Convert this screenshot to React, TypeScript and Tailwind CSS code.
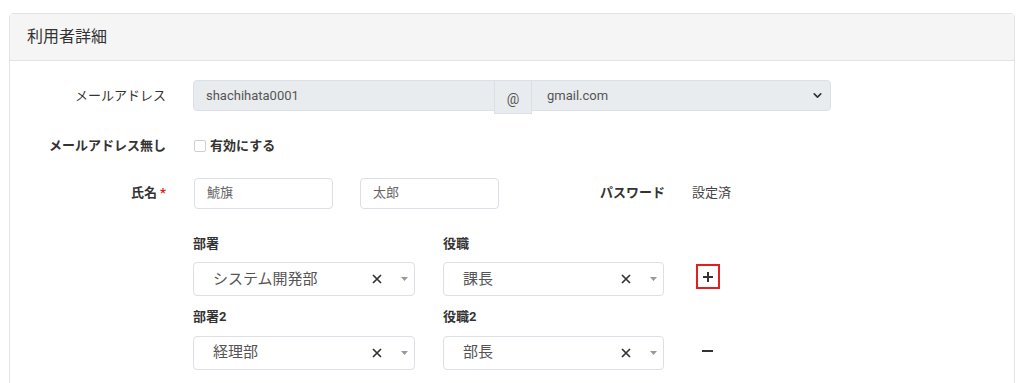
import { ChevronDown } from "lucide-react";

function Select2({ value, width }: { value: string; width: string }) {
  return (
    <div
      className={`flex h-[34px] ${width} items-center rounded border border-[#dcdfe6] bg-white pl-[19px] pr-[6px]`}
    >
      <span className="flex-1 text-[15px] text-[#555]">{value}</span>
      <svg width="10" height="10" viewBox="0 0 10 10" className="mr-[19px]">
        <path d="M1 1l8 8M9 1l-8 8" stroke="#333" strokeWidth="1.7" />
      </svg>
      <svg width="7" height="4" viewBox="0 0 7 4">
        <path d="M0 0h7L3.5 4z" fill="#999" />
      </svg>
    </div>
  );
}

function App() {
  return (
    <div
      className="h-[383px] w-[1024px] overflow-hidden bg-white pl-[9px] pr-[9px] pt-[13px]"
      style={{ fontFamily: "Roboto, 'Noto Sans CJK JP', sans-serif" }}
    >
      <div className="h-[400px] rounded-t border border-[#e3e3e3]">
        <div className="flex h-[47px] items-center border-b border-[#e3e3e3] bg-[#f5f5f5] pl-[17px] text-[16px] text-[#333]">
          利用者詳細
        </div>

        <div className="pt-[19px] text-[13px] text-[#333]">
          {/* email */}
          <div className="flex items-start">
            <div className="w-[156px] pt-[6px] text-right">メールアドレス</div>
            <div className="ml-[27px] flex">
              <div className="flex h-[31px] w-[302px] items-center rounded-l border border-[#dcdfe6] bg-[#e9ecef] pl-[12px] text-[#555]">
                shachihata0001
              </div>
              <div className="-ml-px flex h-[34px] w-[38px] items-center justify-center border border-[#dcdfe6] bg-[#e9ecef] pt-[4px] text-[14px] text-[#555]">
                @
              </div>
              <div className="-ml-px flex h-[31px] w-[300px] items-center rounded-r border border-[#dcdfe6] bg-[#e9ecef] pl-[15px] pr-[6px] text-[#555]">
                <span className="flex-1">gmail.com</span>
                <ChevronDown size={13} strokeWidth={3} color="#333" />
              </div>
            </div>
          </div>

          {/* no email */}
          <div className="mt-[22px] flex items-center font-bold">
            <div className="w-[156px] text-right">メールアドレス無し</div>
            <div className="ml-[28px] flex items-center">
              <span className="h-[12px] w-[12px] rounded-[2px] border border-[#cfcfcf] bg-white" />
              <span className="ml-[4px]">有効にする</span>
            </div>
          </div>

          {/* name */}
          <div className="mt-[22px] flex items-center">
            <div className="w-[156px] text-right font-bold">
              氏名<span className="ml-[3px] text-[#e02020]">*</span>
            </div>
            <div className="ml-[28px] flex h-[31px] w-[139px] items-center rounded border border-[#dcdfe6] pl-[12px] text-[#666]">
              鯱旗
            </div>
            <div className="ml-[27px] flex h-[31px] w-[139px] items-center rounded border border-[#dcdfe6] pl-[12px] text-[#666]">
              太郎
            </div>
            <div className="ml-[101px] font-bold">パスワード</div>
            <div className="ml-[27px] text-[#444]">設定済</div>
          </div>

          {/* departments */}
          <div className="ml-[183px] mt-[25px] flex items-end">
            <div className="w-[250px]">
              <div className="mb-[9px] font-bold">部署</div>
              <Select2 value="システム開発部" width="w-[222px]" />
            </div>
            <div className="w-[253px]">
              <div className="mb-[9px] font-bold">役職</div>
              <Select2 value="課長" width="w-[221px]" />
            </div>
            <div className="mb-[7px] flex h-[25px] w-[24px] items-center justify-center border-2 border-[#e02020]">
              <svg width="12" height="12" viewBox="0 0 12 12">
                <path d="M6 1v10M1 6h10" stroke="#333" strokeWidth="2" />
              </svg>
            </div>
          </div>

          <div className="ml-[183px] mt-[11px] flex items-end">
            <div className="w-[250px]">
              <div className="mb-[9px] font-bold">部署2</div>
              <Select2 value="経理部" width="w-[222px]" />
            </div>
            <div className="w-[253px]">
              <div className="mb-[9px] font-bold">役職2</div>
              <Select2 value="部長" width="w-[221px]" />
            </div>
            <div className="mb-[18px] ml-[6px] h-[2px] w-[11px] bg-[#333]" />
          </div>
        </div>
      </div>
    </div>
  );
}

export default App;
